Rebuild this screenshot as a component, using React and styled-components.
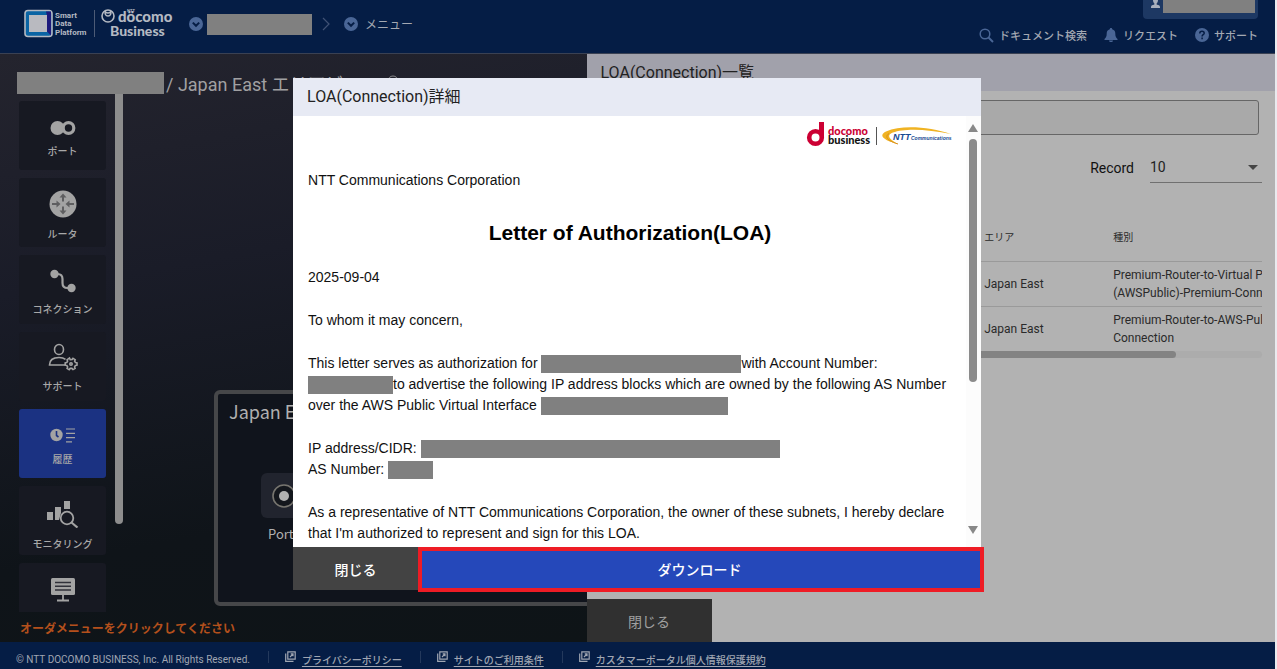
import React from 'react';
import styled, { createGlobalStyle, css } from 'styled-components';

const JP = '"Noto Sans CJK JP", sans-serif';
const ROBOTO = `Roboto, ${JP}`;

const COLORS = {
  NAVY: '#051d45',
  REDACTED: '#808080',
  PANEL: '#b2b2b2',
  PANEL_HEAD: '#a1a1ab',
  ICON: '#a3a3a3',
  HEADER_ICON: '#4a6696',
};

const GlobalStyle = createGlobalStyle`
  * {
    box-sizing: border-box;
  }

  body {
    margin: 0;
    background: #e9eaee;
    font-family: ${ROBOTO};
  }

  button, input, select {
    font-family: inherit;
  }
`;

const Page = styled.div`
  display: flex;
  flex-direction: column;
  height: 100vh;
  padding-right: 2px;
`;

const Redacted = styled.span`
  display: inline-block;
  flex: none;
  width: ${props => props.$width}px;
  height: ${props => props.$height || 18}px;
  background: ${COLORS.REDACTED};
  vertical-align: middle;
`;

/* header */

const Header = styled.header`
  flex: none;
  display: flex;
  justify-content: space-between;
  height: 54px;
  padding: 0 17px 0 24px;
  background: ${COLORS.NAVY};
  border-bottom: 1px solid #3a4153;
  color: #a3a8b2;
  font-family: ${JP};
`;

const HeaderLeft = styled.div`
  display: flex;
  align-items: center;
  height: 48px;
`;

const Brand = styled.a`
  display: flex;
  margin-right: 16px;
`;

const PlainButton = styled.button`
  display: flex;
  align-items: center;
  gap: ${props => props.$gap || 4}px;
  padding: 0;
  border: 0;
  background: none;
  color: #a3a8b2;
  font-size: 12px;
  line-height: 18px;
`;

const Breadcrumb = styled.nav`
  display: flex;
  align-items: center;
  gap: 10px;

  ${PlainButton}:last-child {
    margin-left: 4px;
  }
`;

const HeaderRight = styled.div`
  display: flex;
  flex-direction: column;
  align-items: flex-end;
`;

const UserBox = styled.div`
  display: flex;
  align-items: flex-start;
  gap: 2px;
  height: 19px;
  padding: 0 3px 0 7px;
  border-radius: 0 0 4px 4px;
  background: #1d3863;
`;

const HeaderLinks = styled.nav`
  display: flex;
  gap: 17px;
  margin-top: 7px;
`;

const HeaderLink = styled.a`
  display: flex;
  align-items: center;
  gap: 5px;
  color: #a3a8b2;
  font-size: 11px;
  font-weight: 500;
  line-height: 18px;
  text-decoration: none;
`;

/* left side */

const Main = styled.main`
  flex: 1;
  display: flex;
  min-height: 0;
`;

const Workspace = styled.section`
  flex: 1;
  display: flex;
  flex-direction: column;
  min-width: 0;
  overflow: hidden;
  background: linear-gradient(170deg, #24242e 0%, #1a1c28 35%, #0f1419 75%, #0e1417 100%);
`;

const AreaTitle = styled.h1`
  display: flex;
  align-items: center;
  gap: 2px;
  height: 22px;
  margin: 18px 0 0 17px;
  color: #a0a0a2;
  font-size: 18px;
  font-weight: 400;
  white-space: nowrap;

  svg {
    margin-left: 5px;
  }
`;

const WorkspaceBody = styled.div`
  flex: 1;
  display: flex;
  min-height: 0;
`;

const Sidebar = styled.div`
  display: flex;
  flex-direction: column;
  width: 214px;
  min-height: 0;
`;

const SidebarScroll = styled.div`
  flex: 1;
  display: flex;
  gap: 9px;
  min-height: 0;
  overflow: hidden;
  padding-left: 19px;
`;

const SidebarMenu = styled.nav`
  display: flex;
  flex-direction: column;
  gap: 8px;
  padding-top: 7px;
`;

const SidebarThumb = styled.div`
  width: 8px;
  height: 83%;
  border-radius: 0 0 4px 4px;
  background: #8d8d8d;
`;

const MenuButton = styled.button`
  flex: none;
  display: flex;
  flex-direction: column;
  align-items: center;
  justify-content: flex-end;
  gap: ${props => props.$gap}px;
  width: 87px;
  height: 69px;
  padding: 0 0 ${props => props.$bottom}px;
  border: 0;
  border-radius: 3px;
  background: ${props => (props.$active ? '#1b3282' : '#171922')};
  color: #a8a8a8;
  font-family: ${JP};
  font-size: 10px;
  font-weight: 500;
  line-height: 14px;
`;

const Notice = styled.p`
  margin: 0;
  padding: 7px 0 5px 20px;
  color: #b4501c;
  font-family: ${JP};
  font-size: 12px;
  font-weight: 700;
  line-height: 18px;
  white-space: nowrap;
`;

const Canvas = styled.div`
  flex: 1;
  display: flex;
  align-items: flex-end;
  min-width: 0;
  padding-bottom: 36px;
`;

const AreaBox = styled.div`
  flex: none;
  width: 560px;
  height: 216px;
  padding: 5px 11px;
  border: 4px solid #464749;
  border-radius: 6px;
  background: #10141c;
  color: #b0b0b0;
  font-family: ${JP};
`;

const AreaName = styled.h2`
  margin: 0;
  font-size: 18px;
  font-weight: 400;
  line-height: 24px;
`;

const PortNode = styled.div`
  display: flex;
  flex-direction: column;
  align-items: flex-start;
  gap: 7px;
  margin: 50px 0 0 32px;
  font-size: 13px;
  line-height: 18px;

  span {
    padding-left: 7px;
  }
`;

const PortTile = styled.div`
  display: flex;
  align-items: center;
  justify-content: center;
  width: 46px;
  height: 45px;
  border-radius: 6px;
  background: #21242e;
`;

/* right side */

const Panel = styled.section`
  flex: 0 0 54%;
  display: flex;
  flex-direction: column;
  min-width: 0;
  background: ${COLORS.PANEL};
`;

const PanelTitle = styled.h2`
  margin: 0;
  padding-left: 14px;
  background: ${COLORS.PANEL_HEAD};
  color: #222;
  font-size: 16px;
  font-weight: 400;
  line-height: 37px;
`;

const PanelBody = styled.div`
  flex: 1;
  min-height: 0;
  padding: 9px 13px 0 14px;
`;

const Search = styled.input`
  display: block;
  width: calc(100% - 3px);
  height: 35px;
  border: 1px solid #666;
  border-radius: 3px;
  background: #a9a9a9;
`;

const RecordRow = styled.div`
  display: flex;
  align-items: center;
  justify-content: flex-end;
  gap: 16px;
  margin-top: 17px;
  color: #111;
  font-size: 14px;
`;

const SelectHolder = styled.div`
  display: flex;
  align-items: center;
  width: 112px;
  height: 31px;
  padding-right: 4px;
  border-bottom: 1px solid #707070;
`;

const Select = styled.select`
  flex: 1;
  padding: 0;
  border: 0;
  background: none;
  appearance: none;
  color: #222;
  font-size: 14px;
`;

const Table = styled.table`
  width: 100%;
  margin-top: 30px;
  border-collapse: collapse;
  table-layout: fixed;
  color: #2a2a2a;
  font-size: 12px;
  line-height: 18px;

  th {
    height: 48px;
    padding: 3px 0 0;
    border-bottom: 1px solid #9a9a9a;
    font-size: 10px;
    font-weight: 400;
    text-align: left;
  }

  td {
    height: 45px;
    padding: 0;
    overflow: hidden;
    white-space: nowrap;
  }

  tbody tr + tr td {
    border-top: 1px solid #9a9a9a;
  }
`;

const TableTrack = styled.div`
  height: 7px;
  border-radius: 4px;
  background: #acacac;
`;

const TableThumb = styled.div`
  width: 87%;
  height: 7px;
  border-radius: 4px;
  background: #838383;
`;

const PanelClose = styled.button`
  align-self: flex-start;
  width: 125px;
  height: 43px;
  border: 0;
  background: #303030;
  color: #a0a0a0;
  font-size: 14px;
`;

/* footer */

const Footer = styled.footer`
  flex: none;
  display: flex;
  height: 27px;
  padding: 9px 0 0 16px;
  background: ${COLORS.NAVY};
  color: #a0a6b2;
  font-size: 10px;
  line-height: 18px;
  white-space: nowrap;
`;

const FooterItem = styled.div`
  display: flex;
  align-items: flex-start;
  gap: 6px;
  margin-left: 18px;
  padding-left: 17px;
  background: linear-gradient(#24395c, #24395c) no-repeat left top / 1px 12px;

  a {
    color: inherit;
    font-family: ${JP};
    font-weight: 500;
    text-underline-offset: 2px;
  }
`;

/* modal */

const Overlay = styled.div`
  position: fixed;
  inset: 0;
  display: flex;
  align-items: center;
  justify-content: center;
  padding: 0 3px 1px 0;
`;

const Modal = styled.div`
  display: flex;
  flex-direction: column;
  width: 54%;
  height: calc(100vh - 157px);
  background: #fff;
`;

const ModalTitle = styled.h2`
  flex: none;
  margin: 0;
  padding-left: 14px;
  background: #e7eaf4;
  color: #222;
  font-size: 16px;
  font-weight: 400;
  line-height: 38px;
`;

const ModalBody = styled.div`
  flex: 1;
  display: flex;
  min-height: 0;
`;

const Letter = styled.article`
  flex: 1;
  display: flex;
  flex-direction: column;
  gap: 22px;
  min-width: 0;
  overflow: hidden;
  padding: 6px 14px 0 15px;
  color: #111;
  font-family: "Liberation Sans", Arial, sans-serif;
  font-size: 14px;
  line-height: 21px;

  p {
    margin: 0;
  }
`;

const LetterTitle = styled.h3`
  margin: 8px 0 0;
  color: #000;
  font-size: 21px;
  line-height: 24px;
  text-align: center;
`;

const LetterLogos = styled.div`
  display: flex;
  justify-content: flex-end;
  height: 26px;
`;

const Scrollbar = styled.div`
  display: flex;
  flex-direction: column;
  align-items: center;
  gap: 7px;
  width: 15px;
  padding: 8px 0 13px;
  background: #fcfcfc;
`;

const ScrollTrack = styled.div`
  flex: 1;
`;

const ScrollThumb = styled.div`
  width: 8px;
  height: 64%;
  border-radius: 4px;
  background: #8b8b8b;
`;

const ModalFooter = styled.div`
  flex: none;
  display: flex;
  height: 43px;
`;

const modalButton = css`
  border: 0;
  color: #fff;
  font-size: 14px;
  font-weight: 500;
`;

const CloseButton = styled.button`
  ${modalButton}
  width: 125px;
  background: #434343;
`;

const DownloadButton = styled.button`
  ${modalButton}
  position: relative;
  flex: 1;
  background: #2548ba;
`;

const Highlight = styled.span`
  position: absolute;
  inset: 0 -3px -2px 0;
  border: 4px solid #ee1c25;
`;

const BrandLogo = () => (
  <svg width="149" height="32" viewBox="0 0 149 32" aria-label="Smart Data Platform docomo Business">
    <rect x="1" y="2.500" width="27" height="26" rx="3" fill="#0a64a4" stroke="#b4b9c2" strokeWidth="1.600" />
    <path d="M22 3.500h5v24l-4-4V8z" fill="#1d1a7c" />
    <rect x="5" y="7" width="18" height="17" fill="#b9bac0" />
    <g fill="#b4b9c2" fontFamily="Roboto, sans-serif" fontWeight="700" fontSize="8">
      <text x="31" y="10">Smart</text>
      <text x="31" y="18">Data</text>
      <text x="31" y="27">Platform</text>
    </g>
    <g fill="#b4b9c2" fontFamily="Lato, sans-serif" fontWeight="900">
      <text x="94" y="14" fontSize="15">döcomo</text>
      <text x="103" y="4" fontSize="4">NTT</text>
      <text x="86" y="28" fontSize="14">Business</text>
    </g>
    <path d="M70.500 2v27" stroke="#4d5b76" />
    <circle cx="84" cy="8" r="6" fill="none" stroke="#b4b9c2" strokeWidth="1.600" />
    <path d="M81.500 2.500c-.5 1.500.5 2.500 2.500 2.500s3-1 2.500-2.500c1.200 3 0 5.500-2.500 5.500s-3.700-2.500-2.500-5.500z" fill="none" stroke="#b4b9c2" strokeWidth="1.300" />
  </svg>
);

const CircleChevron = () => (
  <svg width="14" height="14" viewBox="0 0 14 14">
    <circle cx="7" cy="7" r="7" fill={COLORS.HEADER_ICON} />
    <path d="M3.800 5.600 7 8.800l3.200-3.200" fill="none" stroke={COLORS.NAVY} strokeWidth="2" />
  </svg>
);

const SearchIcon = () => (
  <svg width="15" height="15" viewBox="0 0 15 15" fill="none" stroke={COLORS.HEADER_ICON} strokeWidth="1.500">
    <circle cx="6" cy="6" r="4.800" />
    <path d="m9.500 9.500 4.500 4.500" strokeWidth="2" />
  </svg>
);

const BellIcon = () => (
  <svg width="14" height="14" viewBox="0 0 14 14" fill={COLORS.HEADER_ICON}>
    <path d="M7 0c.8 0 1.200.5 1.200 1.200C10.400 1.800 11.300 3.500 11.300 5.500c0 3 .7 4 2.200 5.500v1H.5v-1C2 9.500 2.700 8.500 2.700 5.500c0-2 .9-3.700 3.100-4.300C5.800.5 6.200 0 7 0zM5 12.500h4c0 1-.9 1.500-2 1.500s-2-.5-2-1.500z" />
  </svg>
);

const HelpIcon = () => (
  <svg width="14" height="14" viewBox="0 0 14 14">
    <circle cx="7" cy="7" r="7" fill={COLORS.HEADER_ICON} />
    <path d="M4.800 5.400c0-1.300 1-2.100 2.200-2.100s2.200.8 2.200 1.900c0 1.500-2.100 1.500-2.100 3.200M7.100 9.600v1.600" fill="none" stroke={COLORS.NAVY} strokeWidth="1.500" />
  </svg>
);

const UserIcon = () => (
  <svg width="11" height="9" viewBox="0 0 11 9" fill="#a9b0bd">
    <path d="M3 0h5c0 2-.8 3-1.400 3.600v1c2 .5 3.400 1 3.400 2.400v1H1V7c0-1.400 1.400-1.900 3.400-2.400v-1C3.800 3 3 2 3 0z" />
  </svg>
);

const PortIcon = () => (
  <svg width="26" height="16" viewBox="0 0 26 16">
    <circle cx="7.500" cy="8" r="7" fill={COLORS.ICON} />
    <circle cx="18.500" cy="8" r="5.300" fill="#171922" stroke={COLORS.ICON} strokeWidth="3.200" />
  </svg>
);

const RouterIcon = () => (
  <svg width="28" height="28" viewBox="0 0 28 28">
    <circle cx="14" cy="14" r="13.500" fill={COLORS.ICON} />
    <g fill="#5e5e60">
      <path d="M14 3.500 17.500 7.500H15V11.500H13V7.500H10.500z" />
      <path d="M14 24.500 17.500 20.500H15V16.500H13V20.500H10.500z" />
      <path d="M11.500 14 7.500 10.500V13H3V15H7.500V17.500z" />
      <path d="M16.500 14 20.500 10.500V13H25V15H20.500V17.500z" />
    </g>
  </svg>
);

const ConnectionIcon = () => (
  <svg width="26" height="24" viewBox="0 0 26 24">
    <circle cx="4.500" cy="5" r="4.200" fill={COLORS.ICON} />
    <circle cx="21.500" cy="19" r="4.200" fill={COLORS.ICON} />
    <path d="M5 5h2.500c4 0 5 2 5 5v4c0 3 1.500 5 5 5H21" fill="none" stroke={COLORS.ICON} strokeWidth="2.200" />
  </svg>
);

const SupportIcon = () => (
  <svg width="30" height="28" viewBox="0 0 30 28" fill="none" stroke={COLORS.ICON} strokeWidth="1.600">
    <ellipse cx="11" cy="6.500" rx="4.500" ry="5" />
    <path d="M17 22H1.500c0-5 4-7.500 9.500-7.500 3 0 5 .6 6.500 1.800" />
    <path d="m21.500 15 .7 1.600 2-.1.800-1.200 2.200 1.400-.6 1.500.9 1.300 1.500.3v2.400l-1.600.3-.8 1.400.5 1.500-2.100 1.200-1.100-1.200h-1.700l-1 1.200-2.100-1.200.5-1.500-.8-1.400-1.600-.3v-2.400l1.600-.3.800-1.300-.5-1.500z" />
    <circle cx="23" cy="21" r="1.200" />
  </svg>
);

const HistoryIcon = () => (
  <svg width="26" height="16" viewBox="0 0 26 16">
    <circle cx="6.500" cy="8" r="6.200" fill={COLORS.ICON} />
    <path d="M6.500 4v4.500l2 1.500" fill="none" stroke="#1b3282" strokeWidth="1.600" />
    <path d="M16 2h9M16 6.300h9M16 10.600h9M16 14.900h6" stroke={COLORS.ICON} strokeWidth="1.200" />
  </svg>
);

const MonitoringIcon = () => (
  <svg width="33" height="27" viewBox="0 0 33 27">
    <path d="M1 11h6v8H1zM9 6h6v6l-2 7H9zM18 0h6v8h-6z" fill={COLORS.ICON} />
    <circle cx="21" cy="17" r="6.300" fill="#171922" stroke={COLORS.ICON} strokeWidth="1.800" />
    <path d="m25.500 21.500 6 5" stroke={COLORS.ICON} strokeWidth="2.200" />
  </svg>
);

const BoardIcon = () => (
  <svg width="24" height="24" viewBox="0 0 24 24">
    <rect width="24" height="17" rx="1.500" fill={COLORS.ICON} />
    <path d="M4 4.500h16M4 8.200h16M4 12h16" stroke="#30313a" strokeWidth="1.400" />
    <path d="M12 17v5M6 22.500h12" stroke={COLORS.ICON} strokeWidth="1.800" />
  </svg>
);

const ExternalIcon = () => (
  <svg width="11" height="11" viewBox="0 0 11 11" fill="none" stroke="#a0a6b2" strokeWidth="1.200">
    <path d="M2.800.8h7.400v7.400H2.800zM.7 2.500v7.800h7.800M5 6l3-3M5.700 2.900H8v2.400" />
  </svg>
);

const Triangle = ({ down }) => (
  <svg width="10" height="8" viewBox="0 0 10 8">
    <path d={down ? 'M0 0h10L5 8z' : 'M0 8h10L5 0z'} fill="#888" />
  </svg>
);

const CompanyLogos = () => (
  <svg width="146" height="26" viewBox="0 0 146 26" aria-label="docomo business NTT Communications">
    <path d="M13 0h5v16h-5z" fill="#cc0033" />
    <circle cx="9.500" cy="15.500" r="6.300" fill="#fff" stroke="#cc0033" strokeWidth="4.600" />
    <g fontFamily="Lato, sans-serif" fontWeight="900" fontSize="11">
      <text x="22" y="13" fill="#cc0033">docomo</text>
      <text x="22" y="22" fill="#111">business</text>
    </g>
    <path d="M70.500 5v18" stroke="#555" />
    <path d="M92 22C80 19 71 14 80 9.500 96 2.500 124 5 145 12 122 7 98 6 87 10.500c-8 3-2 7.500 5 11.500z" fill="#f0b323" />
    <path d="M92 22C82 19 78 15 83 11.500" fill="none" stroke="#d98f1a" />
    <g fontFamily='"Liberation Sans", Arial, sans-serif' fontWeight="700" fontStyle="italic" fill="#174a92">
      <text x="87" y="18" fontSize="9">NTT</text>
      <text x="105" y="18" fontSize="5">Communications</text>
    </g>
  </svg>
);

const MENU = [
  { label: 'ポート', icon: <PortIcon />, gap: 8, bottom: 12 },
  { label: 'ルータ', icon: <RouterIcon />, gap: 9, bottom: 6 },
  { label: 'コネクション', icon: <ConnectionIcon />, gap: 9, bottom: 8 },
  { label: 'サポート', icon: <SupportIcon />, gap: 8, bottom: 8 },
  { label: '履歴', icon: <HistoryIcon />, gap: 9, bottom: 12, active: true },
  { label: 'モニタリング', icon: <MonitoringIcon />, gap: 9, bottom: 4 },
  { label: '', icon: <BoardIcon />, gap: 24, bottom: 6 },
];

const ROWS = [
  ['Japan East', 'Premium-Router-to-Virtual P', '(AWSPublic)-Premium-Conn'],
  ['Japan East', 'Premium-Router-to-AWS-Pul', 'Connection'],
];

const FOOTER_LINKS = [
  'プライバシーポリシー',
  'サイトのご利用条件',
  'カスタマーポータル個人情報保護規約',
];

function PageHeader() {
  return (
    <Header>
      <HeaderLeft>
        <Brand href="#"><BrandLogo /></Brand>
        <Breadcrumb>
          <PlainButton>
            <CircleChevron />
            <Redacted $width={105} $height={21} />
          </PlainButton>
          <svg width="8" height="14" viewBox="0 0 8 14">
            <path d="m1 1 6 6-6 6" fill="none" stroke="#405275" strokeWidth="1.200" />
          </svg>
          <PlainButton $gap={7}>
            <CircleChevron />
            メニュー
          </PlainButton>
        </Breadcrumb>
      </HeaderLeft>
      <HeaderRight>
        <UserBox>
          <UserIcon />
          <Redacted $width={92} $height={13} />
        </UserBox>
        <HeaderLinks>
          <HeaderLink href="#"><SearchIcon />ドキュメント検索</HeaderLink>
          <HeaderLink href="#"><BellIcon />リクエスト</HeaderLink>
          <HeaderLink href="#"><HelpIcon />サポート</HeaderLink>
        </HeaderLinks>
      </HeaderRight>
    </Header>
  );
}

function AreaView() {
  return (
    <Workspace>
      <AreaTitle>
        <Redacted $width={147} $height={22} />
        / Japan East エリアビュー
        <svg width="12" height="18" viewBox="0 0 12 18">
          <circle cx="6" cy="7" r="5" fill="none" stroke="#8a8a8c" />
        </svg>
      </AreaTitle>
      <WorkspaceBody>
        <Sidebar>
          <SidebarScroll>
            <SidebarMenu>
              {MENU.map((item, index) => (
                <MenuButton
                  key={'menu' + index}
                  $active={item.active}
                  $gap={item.gap}
                  $bottom={item.bottom}
                >
                  {item.icon}
                  <span>{item.label}</span>
                </MenuButton>
              ))}
            </SidebarMenu>
            <SidebarThumb />
          </SidebarScroll>
          <Notice>オーダメニューをクリックしてください</Notice>
        </Sidebar>
        <Canvas>
          <AreaBox>
            <AreaName>Japan East</AreaName>
            <PortNode>
              <PortTile>
                <svg width="24" height="24" viewBox="0 0 24 24">
                  <circle cx="12" cy="12" r="11" fill="#14171d" stroke="#77756f" strokeWidth="1.600" />
                  <circle cx="12" cy="12" r="5" fill="#b2b2b2" />
                </svg>
              </PortTile>
              <span>Port</span>
            </PortNode>
          </AreaBox>
        </Canvas>
      </WorkspaceBody>
    </Workspace>
  );
}

function LoaList() {
  return (
    <Panel>
      <PanelTitle>LOA(Connection)一覧</PanelTitle>
      <PanelBody>
        <Search type="text" aria-label="検索" />
        <RecordRow>
          <label htmlFor="record">Record</label>
          <SelectHolder>
            <Select id="record" defaultValue="10">
              <option value="10">10</option>
            </Select>
            <svg width="10" height="5" viewBox="0 0 10 5"><path d="M0 0h10L5 5z" fill="#444" /></svg>
          </SelectHolder>
        </RecordRow>
        <Table>
          <colgroup>
            <col width="58%" />
            <col width="129" />
            <col />
          </colgroup>
          <thead>
            <tr>
              <th />
              <th>エリア</th>
              <th>種別</th>
            </tr>
          </thead>
          <tbody>
            {ROWS.map(([area, first, second], index) => (
              <tr key={'row' + index}>
                <td />
                <td>{area}</td>
                <td>{first}<br />{second}</td>
              </tr>
            ))}
          </tbody>
        </Table>
        <TableTrack><TableThumb /></TableTrack>
      </PanelBody>
      <PanelClose>閉じる</PanelClose>
    </Panel>
  );
}

function LoaModal() {
  return (
    <Overlay>
      <Modal role="dialog" aria-labelledby="loa-title">
        <ModalTitle id="loa-title">LOA(Connection)詳細</ModalTitle>
        <ModalBody>
          <Letter>
            <LetterLogos><CompanyLogos /></LetterLogos>
            <p>NTT Communications Corporation</p>
            <LetterTitle>Letter of Authorization(LOA)</LetterTitle>
            <p>2025-09-04</p>
            <p>To whom it may concern,</p>
            <p>
              This letter serves as authorization for <Redacted $width={200} />with Account Number:{' '}
              <Redacted $width={85} />to advertise the following IP address blocks which are owned by the
              following AS Number over the AWS Public Virtual Interface <Redacted $width={187} />
            </p>
            <p>
              IP address/CIDR: <Redacted $width={359} />
              <br />
              AS Number: <Redacted $width={45} />
            </p>
            <p>
              As a representative of NTT Communications Corporation, the owner of these subnets, I hereby
              declare that I'm authorized to represent and sign for this LOA.
            </p>
          </Letter>
          <Scrollbar>
            <Triangle />
            <ScrollTrack>
              <ScrollThumb />
            </ScrollTrack>
            <Triangle down />
          </Scrollbar>
        </ModalBody>
        <ModalFooter>
          <CloseButton>閉じる</CloseButton>
          <DownloadButton>
            ダウンロード
            <Highlight />
          </DownloadButton>
        </ModalFooter>
      </Modal>
    </Overlay>
  );
}

function App() {
  return (
    <>
      <GlobalStyle />
      <Page>
        <PageHeader />
        <Main>
          <AreaView />
          <LoaList />
        </Main>
        <Footer>
          <span>© NTT DOCOMO BUSINESS, Inc. All Rights Reserved.</span>
          {FOOTER_LINKS.map(label => (
            <FooterItem key={label}>
              <ExternalIcon />
              <a href="#">{label}</a>
            </FooterItem>
          ))}
        </Footer>
      </Page>
      <LoaModal />
    </>
  );
}

export default App;
